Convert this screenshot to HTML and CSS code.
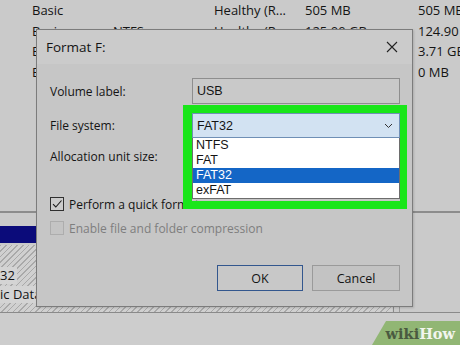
FILE: index.html
```html
<!DOCTYPE html>
<html>
<head>
<meta charset="utf-8">
<link rel="stylesheet" href="styles.css">
</head>
<body>
<div class="screen">
  <div class="volumes">
    <div class="vrow"><span>Basic</span><span></span><span>Healthy (R...</span><span>505 MB</span><span>505 MB</span></div>
    <div class="vrow"><span>Basic</span><span>NTFS</span><span>Healthy (R...</span><span>125.00 GB</span><span>124.90 GB</span></div>
    <div class="vrow"><span>Basic</span><span></span><span>Healthy (R...</span><span>3.72 GB</span><span>3.71 GB</span></div>
    <div class="vrow"><span>Basic</span><span></span><span>Healthy (R...</span><span>0 MB</span><span>0 MB</span></div>
  </div>

  <div class="lower">
    <div class="partition">
      <div class="phead"></div>
      <div class="pbody">
        <span class="plabel">32</span>
        <span class="plabel">ic Data Partition</span>
      </div>
    </div>
    <div class="psep"></div>
    <div class="prest"></div>
  </div>
  <div class="strip"></div>

  <div class="dialog">
    <div class="titlebar">
      <span class="title">Format F:</span>
      <svg class="close" width="12" height="12" viewBox="0 0 12 12"><path d="M1 1 L11 11 M11 1 L1 11" stroke="#222" stroke-width="1.1" fill="none"/></svg>
    </div>
    <div class="dbody">
      <div class="frow r1">
        <span class="label">Volume label:</span>
        <div class="field">USB</div>
      </div>
      <div class="frow r2">
        <span class="label">File system:</span>
        <div class="combo-wrap">
          <div class="combo">
            <span>FAT32</span>
            <svg class="chev" width="9" height="6" viewBox="0 0 9 6"><path d="M1 1 L4.5 4.5 L8 1" stroke="#333" stroke-width="1" fill="none"/></svg>
          </div>
          <ul class="dropdown">
            <li>NTFS</li>
            <li>FAT</li>
            <li class="sel">FAT32</li>
            <li>exFAT</li>
          </ul>
          <div class="highlight"></div>
        </div>
      </div>
      <div class="frow r3">
        <span class="label">Allocation unit size:</span>
      </div>
      <div class="check r4">
        <span class="box on"><svg width="12" height="12" viewBox="0 0 12 12"><path d="M2 6.2 L4.8 9 L10.5 2.5" stroke="#1a1a1a" stroke-width="1.1" fill="none"/></svg></span>
        <span class="ctext">Perform a quick format</span>
      </div>
      <div class="check r5 disabled">
        <span class="box"></span>
        <span class="ctext">Enable file and folder compression</span>
      </div>
      <div class="buttons">
        <div class="btn ok">OK</div>
        <div class="btn">Cancel</div>
      </div>
    </div>
  </div>

  <div class="wm"><span class="wiki">wiki</span><span class="how">How</span></div>
</div>
</body>
</html>
```

FILE: styles.css
```css
html, body {
  margin: 0;
  padding: 0;
}
body {
  width: 460px;
  height: 345px;
  overflow: hidden;
  background: #cacaca;
  font-family: "Open Sans", "Noto Sans", sans-serif;
  color: #141414;
}
.screen {
  position: relative;
  width: 460px;
  height: 345px;
  display: flex;
  flex-direction: column;
}
.volumes {
  padding-left: 32px;
}
.vrow {
  display: grid;
  grid-template-columns: 81px 101px 91px 113px 42px;
  height: 20.5px;
  align-items: center;
  font-size: 13px;
  white-space: nowrap;
}
.vrow span {
  overflow: hidden;
}
.lower {
  margin-top: 129px;
  border-top: 2px solid #8c8c8c;
  padding-top: 13px;
  display: flex;
  height: 101px;
  box-sizing: border-box;
}
.partition {
  width: 392px;
  display: flex;
  flex-direction: column;
}
.phead {
  height: 17px;
  background: #0b0b7a;
}
.pbody {
  flex: 1;
  margin-top: 2px;
  background: repeating-linear-gradient(135deg, #a9a9a9 0 1px, #d0d0d0 1px 4px);
  display: flex;
  flex-direction: column;
  align-items: flex-start;
  padding-top: 22px;
  gap: 2px;
  font-size: 13px;
}
.plabel {
  background: #d4d4d4;
  line-height: 17px;
  padding-right: 2px;
  white-space: nowrap;
}
.psep {
  width: 5px;
  margin-left: 1px;
  border-left: 1px solid #8a8a8a;
  border-right: 1px solid #9a9a9a;
}
.prest {
  flex: 1;
}
.strip {
  flex: 1;
  border-top: 1px solid #8a8a8a;
  background: #cdcdcd;
}

/* dialog window */
.dialog {
  position: absolute;
  left: 36px;
  top: 29px;
  width: 377px;
  height: 278px;
  box-sizing: border-box;
  border: 1px solid #7c7c7c;
  background: #c6c6c6;
  display: flex;
  flex-direction: column;
  box-shadow: 1px 1px 2px rgba(0,0,0,0.15);
}
.titlebar {
  height: 34px;
  background: #cbcbcb;
  display: flex;
  align-items: center;
  justify-content: space-between;
  padding: 0 14px 0 9px;
}
.title {
  font-size: 13.5px;
  color: #141414;
}
.close {
  display: block;
}
.dbody {
  flex: 1;
  display: flex;
  flex-direction: column;
  padding: 0 12px 0 13px;
  font-size: 12px;
}
.frow {
  display: flex;
  align-items: center;
}
.label {
  width: 142px;
  flex: none;
}
.r1 { margin-top: 14px; height: 26px; }
.r2 { margin-top: 9px; height: 25px; }
.r3 { margin-top: 6px; height: 25px; }
.field {
  width: 208px;
  height: 26px;
  box-sizing: border-box;
  border: 1px solid #8e8e8e;
  background: #c9c9c9;
  padding-left: 4px;
  display: flex;
  align-items: center;
  font-family: "Liberation Sans", Arial, sans-serif;
  font-size: 12.5px;
}
.combo-wrap {
  position: relative;
  width: 208px;
  height: 25px;
  z-index: 2;
}
.combo {
  height: 25px;
  box-sizing: border-box;
  border: 1px solid #6f8fb5;
  background: #d2e2f2;
  display: flex;
  align-items: center;
  justify-content: space-between;
  padding: 0 6px 0 4px;
  font-family: "Liberation Sans", Arial, sans-serif;
  font-size: 12.5px;
}
.chev { display: block; }
.dropdown {
  position: absolute;
  left: 0;
  top: 25px;
  width: 208px;
  box-sizing: border-box;
  margin: 0;
  padding: 0;
  list-style: none;
  background: #fff;
  border: 1px solid #6d6d6d;
  border-top: none;
  font-family: "Liberation Sans", Arial, sans-serif;
  font-size: 12.5px;
}
.dropdown li {
  height: 15px;
  line-height: 15px;
  padding-left: 3px;
}
.dropdown li.sel {
  background: #1466c6;
  color: #fff;
}
.highlight {
  position: absolute;
  left: -9px;
  top: -8px;
  width: 208px;
  height: 88px;
  border: 8px solid #19e619;
  border-left-width: 9px;
  border-right-width: 7px;
  pointer-events: none;
}
.check {
  display: flex;
  align-items: center;
  height: 16px;
  white-space: nowrap;
}
.r4 { margin-top: 27px; }
.r5 { margin-top: 8px; }
.box {
  width: 14px;
  height: 14px;
  box-sizing: border-box;
  border: 1px solid #303030;
  background: #cbcbcb;
  display: flex;
  align-items: center;
  justify-content: center;
  margin-right: 5px;
  flex: none;
}
.disabled .box {
  border-color: #adadad;
  background: #c4c4c4;
}
.disabled .ctext {
  color: #7e7e7e;
}
.buttons {
  margin-top: 29px;
  display: flex;
  justify-content: flex-end;
  gap: 9px;
}
.btn {
  width: 88px;
  height: 26px;
  box-sizing: border-box;
  border: 1px solid #9a9a9a;
  background: #c3c3c3;
  display: flex;
  align-items: center;
  justify-content: center;
  font-size: 12.5px;
}
.btn.ok {
  width: 86px;
  border: 1px solid #33578e;
  background: #c8c8c8;
}

/* watermark */
.wm {
  position: absolute;
  right: 0;
  bottom: 0;
  width: 88px;
  height: 24px;
  background: rgba(134, 178, 100, 0.85);
  clip-path: polygon(14px 0, 100% 0, 100% 100%, 0 100%);
  display: flex;
  align-items: center;
  justify-content: flex-end;
  padding-right: 5px;
  box-sizing: border-box;
  font-family: "DejaVu Serif", "Liberation Serif", serif;
  font-weight: bold;
  font-size: 14.5px;
}
.wiki { color: #4a5a40; }
.how { color: #f2f5ee; }
```
